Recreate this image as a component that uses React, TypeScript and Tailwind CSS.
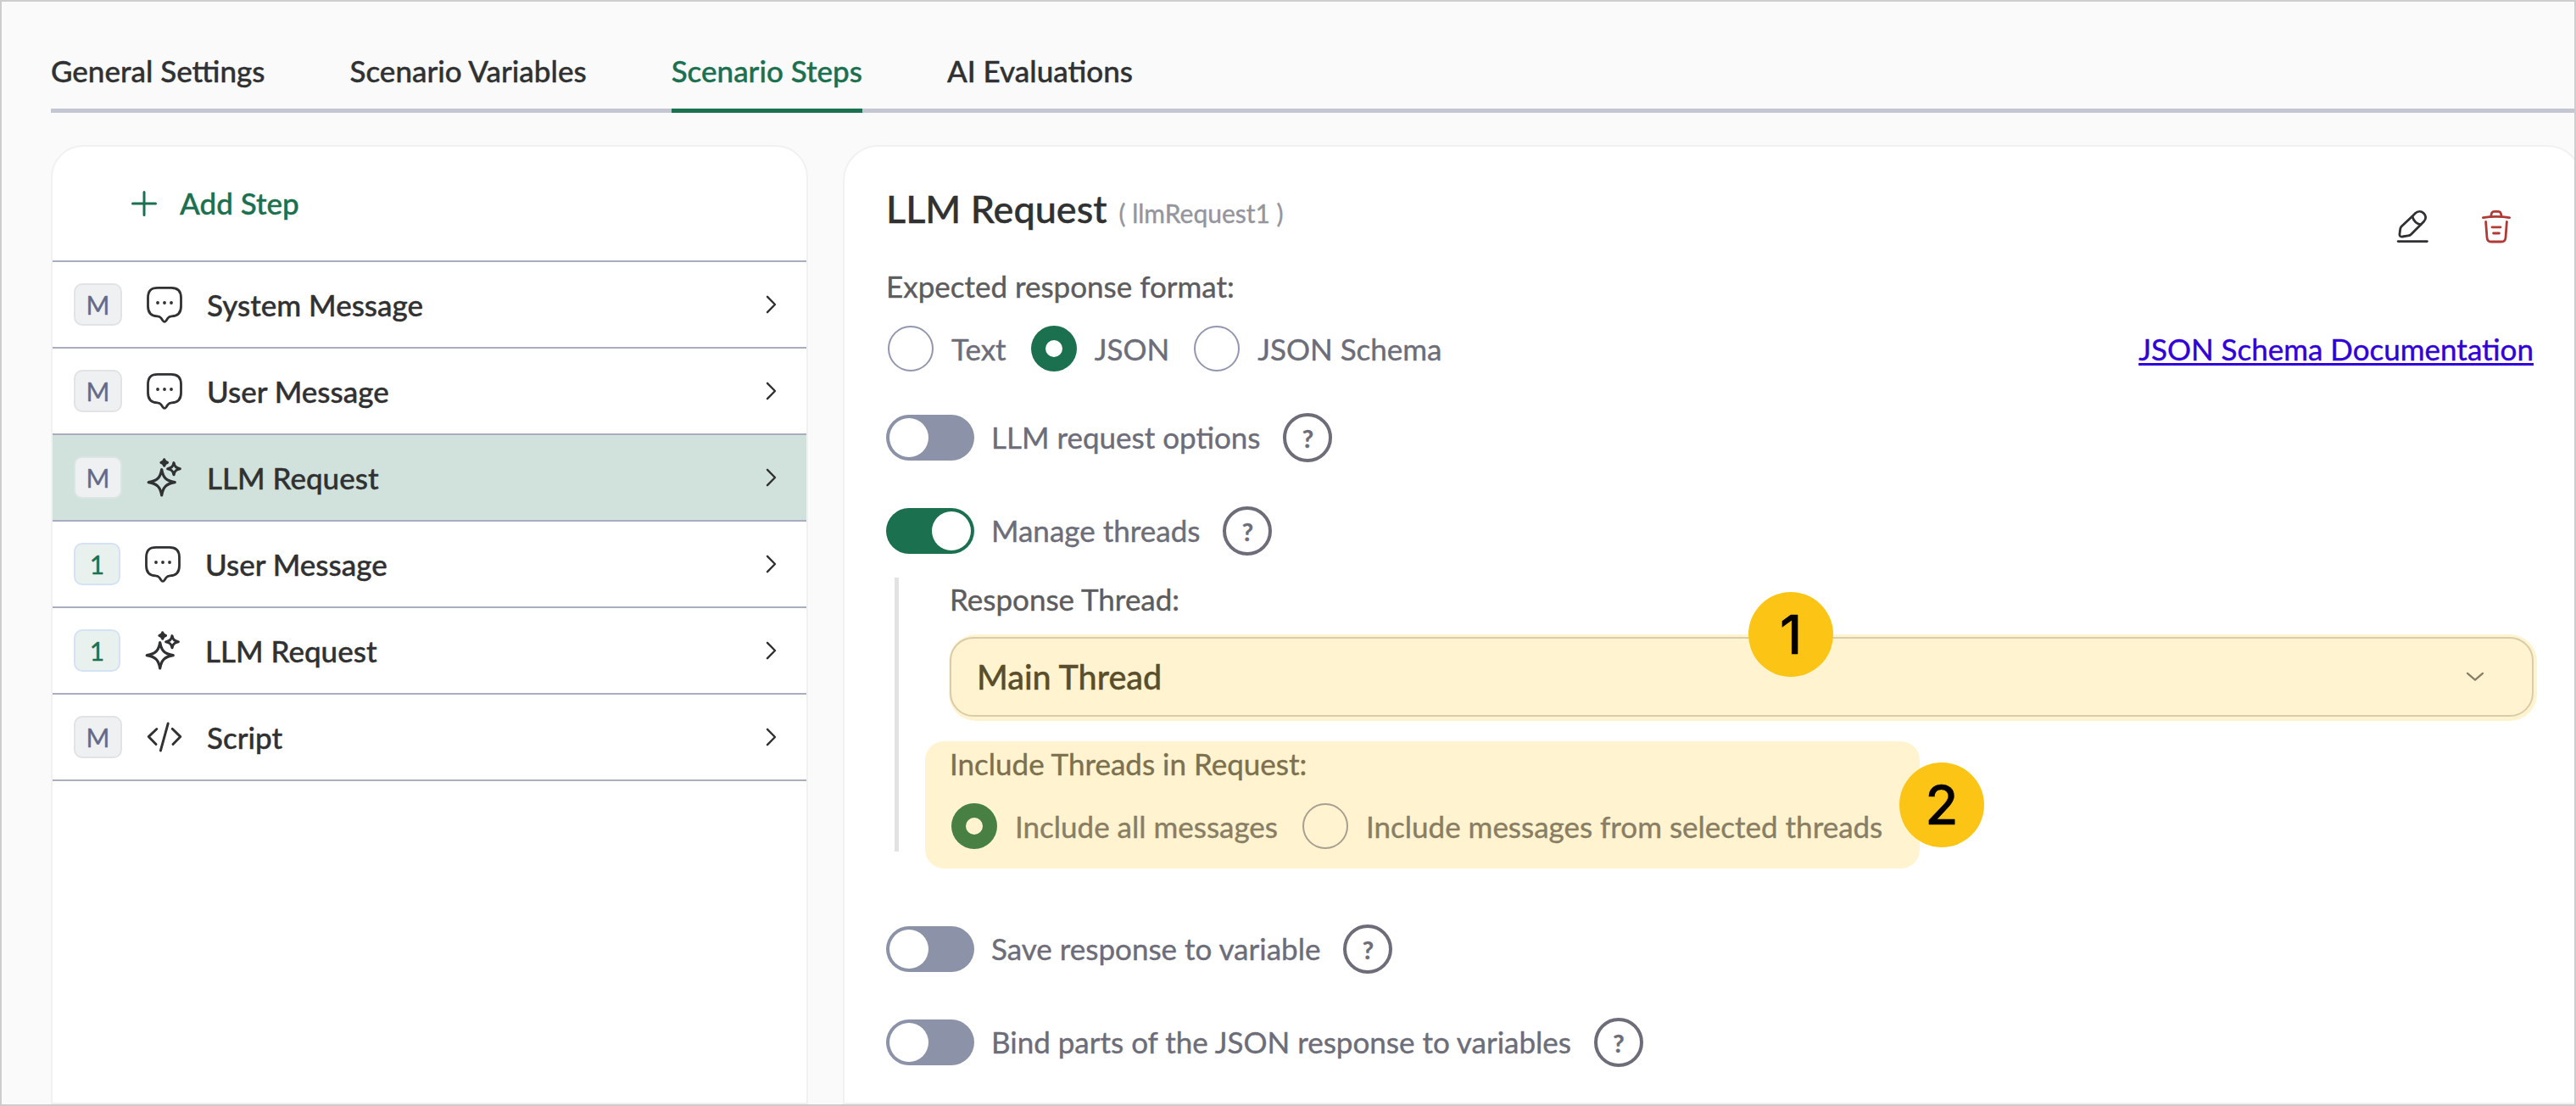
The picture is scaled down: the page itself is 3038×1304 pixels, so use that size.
import { useState } from "react";
import type { ReactNode } from "react";
import clsx from "clsx";

type StepKind = "message" | "llm" | "script";

interface Step {
  id: number;
  thread: string;
  kind: StepKind;
  title: string;
}

const TABS = ["General Settings", "Scenario Variables", "Scenario Steps", "AI Evaluations"];

const STEPS: Step[] = [
  { id: 1, thread: "M", kind: "message", title: "System Message" },
  { id: 2, thread: "M", kind: "message", title: "User Message" },
  { id: 3, thread: "M", kind: "llm", title: "LLM Request" },
  { id: 4, thread: "1", kind: "message", title: "User Message" },
  { id: 5, thread: "1", kind: "llm", title: "LLM Request" },
  { id: 6, thread: "M", kind: "script", title: "Script" },
];

function MessageIcon() {
  return (
    <svg width="42" height="44" viewBox="0 0 42 44" fill="none" stroke="currentColor" strokeWidth="2.8" strokeLinejoin="round">
      <path d="M13 2.3H29C37 2.3 40.5 6 40.5 14V24C40.5 32 37 35.6 29.5 35.8C27 35.9 26 36.6 25 38L23 41C21.8 42.7 20.2 42.7 19 41L17 38C16 36.6 15 35.9 12.5 35.8C5 35.6 1.5 32 1.5 24V14C1.5 6 5 2.3 13 2.3Z" />
      <g fill="currentColor" stroke="none">
        <circle cx="13" cy="20" r="1.9" />
        <circle cx="21" cy="20" r="1.9" />
        <circle cx="29" cy="20" r="1.9" />
      </g>
    </svg>
  );
}

function SparkleIcon() {
  return (
    <svg width="42" height="46" viewBox="0 0 42 46" fill="none" stroke="currentColor" strokeWidth="3.2" strokeLinejoin="round">
      <path d="M17.7 13.5C19.3 23 22.5 26.8 33.2 28.7C22.5 30.6 19.3 34.5 17.7 44C16.1 34.5 12.9 30.6 2.2 28.7C12.9 26.8 16.1 23 17.7 13.5Z" />
      <path d="M32 5.7C32.8 10 34.5 11.8 39.3 12.7C34.5 13.6 32.8 15.4 32 19.7C31.2 15.4 29.5 13.6 24.7 12.7C29.5 11.8 31.2 10 32 5.7Z" />
      <path d="M20.7 1.8C21.3 4.2 22 4.8 24.4 5.4C22 6 21.3 6.6 20.7 9C20.1 6.6 19.4 6 17 5.4C19.4 4.8 20.1 4.2 20.7 1.8Z" fill="currentColor" />
    </svg>
  );
}

function ScriptIcon() {
  return (
    <svg width="42" height="36" viewBox="0 0 42 36" fill="none" stroke="currentColor" strokeWidth="2.9" strokeLinecap="round" strokeLinejoin="round">
      <path d="M11.8 8.5L2.2 17.6L11 26.5" />
      <path d="M25.2 2L16.4 34" />
      <path d="M30.2 8.2L39.8 17.6L31 26.5" />
    </svg>
  );
}

function EditIcon() {
  return (
    <svg width="40" height="40" viewBox="0 0 40 40" fill="none" stroke="currentColor" strokeWidth="2.8" strokeLinecap="round" strokeLinejoin="round">
      <path d="M19.5 7.5L22.3 4.6C25.6 1.4 29.6 1.8 32.2 4.3C35.2 7.2 35.6 11 32.5 14.2L17.6 29.2C16.6 30.2 15.6 30.7 14.2 30.9L7.2 32C4.7 32.3 3.7 31.1 4 28.8L4.8 22.8C5 21.5 5.5 20.6 6.4 19.7Z" />
      <path d="M19 8.3C20.6 13.6 24 16.8 29 17.8" />
      <path d="M2.2 37.6H36.4" />
    </svg>
  );
}

function TrashIcon() {
  return (
    <svg width="36" height="40" viewBox="0 0 36 40" fill="none" stroke="currentColor" strokeWidth="2.8" strokeLinecap="round" strokeLinejoin="round">
      <path d="M2.4 9.6C12 8.2 24 8.2 33.6 9.6" />
      <path d="M11.8 8.2C12 4 12.8 2.4 15.4 2.4H20.4C23 2.4 23.8 4 24 8.2" />
      <path d="M5.6 14.4L7 33C7.3 36.4 8.5 38 11.8 38H24.2C27.5 38 28.7 36.4 29 33L30.4 14.4" />
      <path d="M13 20.8H23" />
      <path d="M14.6 28H21.4" />
    </svg>
  );
}

const STEP_ICONS: Record<StepKind, ReactNode> = {
  message: <MessageIcon />,
  llm: <SparkleIcon />,
  script: <ScriptIcon />,
};

function StepRow({ step, active, onClick }: { step: Step; active: boolean; onClick: () => void }) {
  const main = step.thread === "M";
  return (
    <div
      onClick={onClick}
      className={clsx(
        "flex h-[102px] cursor-pointer items-center border-b-2 border-[#a9adbf] pr-[35px] pl-[25px]",
        active && "bg-[#d1e2dc]"
      )}
    >
      <div
        className={clsx(
          "flex h-[50px] items-center justify-center rounded-[10px] border-2 text-[30px]",
          main ? "w-[57px] bg-[#eef0f2] text-[#646a86]" : "w-[55px] border-[#d3e3f5] bg-[#e9f1ee] text-[#1b704f]",
          main && (active ? "border-[#dde5e4]" : "border-[#e2e3e5]")
        )}
      >
        {step.thread}
      </div>
      <div className="ml-[29px] flex w-[42px] items-center justify-center text-[#303132]">
        {STEP_ICONS[step.kind]}
      </div>
      <span className="ml-[29px] flex-1 font-medium text-[#303132]">{step.title}</span>
      <svg width="13" height="22" viewBox="0 0 13 22" fill="none" stroke="#303132" strokeWidth="2.4" strokeLinecap="round" strokeLinejoin="round">
        <path d="M2 1.8L11 11L2 20.2" />
      </svg>
    </div>
  );
}

function Radio({ checked, label }: { checked?: boolean; label: string }) {
  return (
    <label className="flex h-[54px] items-center gap-[21px] whitespace-nowrap">
      <span
        className={clsx(
          "flex size-[54px] shrink-0 items-center justify-center rounded-full",
          checked ? "bg-[#1b704f]" : "border-2 border-[#9296b0]"
        )}
      >
        {checked && <span className="size-5 rounded-full bg-white" />}
      </span>
      {label}
    </label>
  );
}

function ToggleRow({ on, label, className }: { on?: boolean; label: string; className?: string }) {
  return (
    <div className={clsx("flex h-[58px] items-center", className)}>
      <span
        className={clsx(
          "flex h-[54px] w-[104px] items-center rounded-full px-1",
          on ? "justify-end bg-[#1b704f]" : "bg-[#8c93a8]"
        )}
      >
        <span className="size-[46px] rounded-full bg-white" />
      </span>
      <span className="mb-[2px] ml-5">{label}</span>
      <span className="ml-[27px] flex size-[58px] items-center justify-center rounded-full border-4 border-[#6c6d78] text-[29px] font-bold">
        ?
      </span>
    </div>
  );
}

function Marker({ value, className }: { value: number; className: string }) {
  return (
    <span
      className={clsx(
        "absolute z-10 flex size-[100px] items-center justify-center rounded-full bg-[#fcc515] font-['Inter',sans-serif] text-[63px] leading-none font-medium text-black",
        className
      )}
    >
      {value}
    </span>
  );
}

export default function App() {
  const [tab, setTab] = useState("Scenario Steps");
  const [activeStep, setActiveStep] = useState(3);

  return (
    <div className="flex h-[1304px] w-[3038px] flex-col overflow-hidden border-2 border-[#cdcdcd] bg-[#fafafa] font-['Lato',sans-serif] text-[35px] leading-none [-webkit-text-stroke:0.4px]">
      {/* Tabs */}
      <div className="ml-[58px] flex h-[131px] shrink-0 gap-[100px] border-b-[5px] border-[#c4c6d2]">
        {TABS.map((t) => (
          <button
            key={t}
            onClick={() => setTab(t)}
            className={clsx(
              "-mb-[5px] cursor-pointer border-b-[5px] pt-[37px] font-medium whitespace-nowrap",
              t === tab ? "border-[#1b704f] text-[#1b704f]" : "border-transparent text-[#303132]"
            )}
          >
            {t}
          </button>
        ))}
      </div>

      <div className="mt-[38px] ml-[58px] flex h-[1140px] gap-[41px]">
        {/* Step list */}
        <div className="w-[893px] shrink-0 overflow-hidden rounded-t-[38px] border-2 border-[#f1f1f2] bg-white">
          <div className="flex h-[136px] items-center border-b-2 border-[#a9adbf] pl-[92px] font-medium text-[#1b704f]">
            <svg width="32" height="32" viewBox="0 0 32 32" fill="none" stroke="currentColor" strokeWidth="3" strokeLinecap="round">
              <path d="M16 2.5V29.5M2.5 16H29.5" />
            </svg>
            <span className="mb-[2px] ml-[26px]">Add Step</span>
          </div>
          {STEPS.map((s) => (
            <StepRow key={s.id} step={s} active={s.id === activeStep} onClick={() => setActiveStep(s.id)} />
          ))}
        </div>

        {/* Step details */}
        <div className="w-[2052px] shrink-0 rounded-t-[42px] border-2 border-[#f1f1f2] bg-white pt-[42px] pr-[56px] pl-[49px] text-[#6c6d78]">
          <div className="flex h-[102px] items-start">
            <div className="mt-px flex h-[60px] items-baseline gap-[14px]">
              <h1 className="text-[45px] leading-[60px] font-medium text-[#303132]">LLM Request</h1>
              <span className="text-[30px] text-[#94959e]">( llmRequest1 )</span>
            </div>
            <div className="mt-[32px] mr-[26px] ml-auto flex gap-[60px]">
              <button className="cursor-pointer text-[#303132]"><EditIcon /></button>
              <button className="cursor-pointer text-[#b03a35]"><TrashIcon /></button>
            </div>
          </div>

          <div className="flex h-10 items-center text-[#5c5c5e]">Expected response format:</div>
          <div className="mt-[27px] flex items-center gap-[29px] pl-[2px]">
            <Radio label="Text" />
            <Radio label="JSON" checked />
            <Radio label="JSON Schema" />
            <a href="#" className="ml-auto text-[#3000d8] underline decoration-[3px] underline-offset-[3px]">
              JSON Schema Documentation
            </a>
          </div>

          <ToggleRow className="mt-[49px]" label="LLM request options" />
          <ToggleRow className="mt-[52px]" label="Manage threads" on />

          {/* Thread settings */}
          <div className="mt-[26px] ml-[10px] h-[323px] border-l-[5px] border-[#e2e2e3] pt-[5px] pl-[60px]">
            <div className="flex h-10 items-center text-[#5c5c5e]">Response Thread:</div>
            <div className="relative mt-[25px] flex h-[94px] items-center justify-between rounded-[28px] border-2 border-[#cfcfcf] pr-[56px] pl-[30px]">
              <span className="text-[39.5px] font-medium text-[#303132]">Main Thread</span>
              <svg width="22" height="12" viewBox="0 0 22 12" fill="none" stroke="#6c6d78" strokeWidth="2.2" strokeLinecap="round" strokeLinejoin="round">
                <path d="M2 1.8L11 9.6L20 1.8" />
              </svg>
              <div className="absolute -top-[5px] -right-[6px] -bottom-[7px] -left-[3px] rounded-[32px] bg-[#ffc515]/20" />
              <Marker value={1} className="-top-[55px] left-[940px]" />
            </div>
            <div className="relative mt-[35px]">
              <div className="flex h-10 items-center text-[#5c5c5e]">Include Threads in Request:</div>
              <div className="mt-[27px] flex items-center gap-[29px] pl-[2px]">
                <Radio label="Include all messages" checked />
                <Radio label="Include messages from selected threads" />
              </div>
              <div className="absolute -top-[6px] -left-[29px] h-[150px] w-[1173px] rounded-[22px] bg-[#ffc515]/20" />
              <Marker value={2} className="top-[19px] left-[1120px]" />
            </div>
          </div>

          <ToggleRow className="mt-[86px]" label="Save response to variable" />
          <ToggleRow className="mt-[52px]" label="Bind parts of the JSON response to variables" />
        </div>
      </div>
    </div>
  );
}
